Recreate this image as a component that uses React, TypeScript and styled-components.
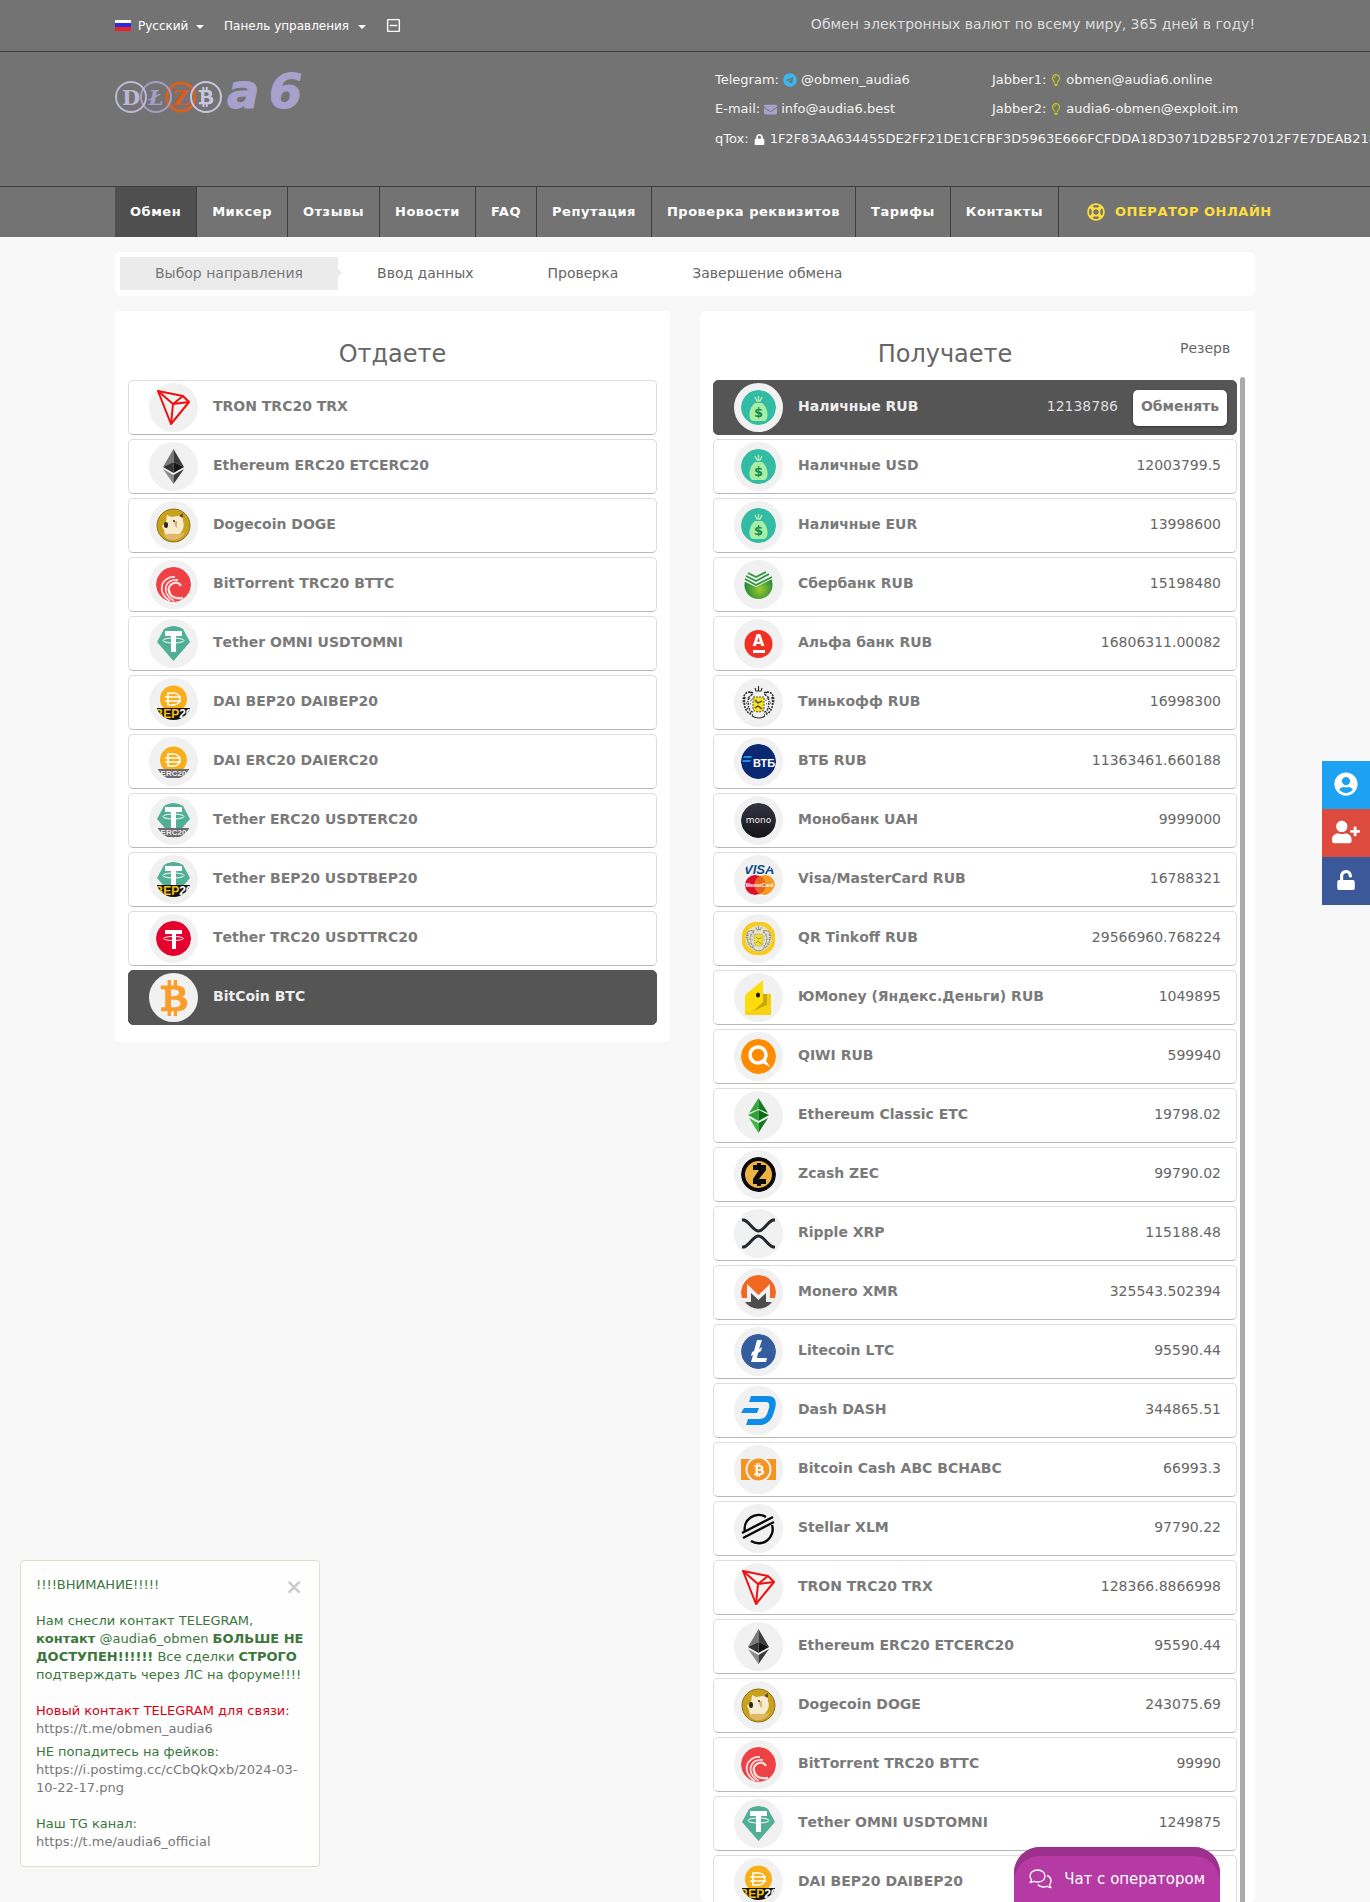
import React, { useState } from "react";
import styled, { createGlobalStyle, css } from "styled-components";
import {
  FaBtc,
  FaEnvelope,
  FaLock,
  FaRegLifeRing,
  FaRegLightbulb,
  FaRegMinusSquare,
  FaTelegram,
  FaUnlock,
  FaUserCircle,
  FaUserPlus,
} from "react-icons/fa";

const GlobalStyle = createGlobalStyle`
  *, *::before, *::after { box-sizing: border-box; }
  body {
    margin: 0;
    background: #f8f8f8;
    color: #666;
    font-family: "DejaVu Sans", Verdana, sans-serif;
    font-size: 14px;
    line-height: 20px;
  }
  a { color: inherit; text-decoration: none; }
  button, select { font: inherit; color: inherit; }
  ul, ol { list-style: none; margin: 0; padding: 0; }
`;

/* ---------- layout ---------- */

const Shell = styled.div`
  display: flex;
  flex-direction: column;
  height: 100vh;
  overflow: hidden;
`;

const Container = styled.div`
  width: 100%;
  max-width: 1140px;
  margin: 0 auto;
`;

const TopBar = styled.div`
  flex: none;
  background: #737373;
  border-bottom: 1px solid #3d3d3d;
  color: #fff;
`;

const TopRow = styled(Container)`
  display: flex;
  align-items: center;
  height: 51px;
  font-size: 12px;
`;

const Language = styled.label`
  display: flex;
  align-items: center;
  gap: 7px;
  margin-right: 20px;
`;

const LanguageSelect = styled.select`
  appearance: none;
  border: 0;
  padding: 0;
  background: none;
  outline-offset: 2px;
`;

const MenuButton = styled.button`
  display: flex;
  align-items: center;
  gap: 9px;
  padding: 0;
  border: 0;
  background: none;
  cursor: pointer;
  margin-right: 20px;
`;

const Caret = styled.span`
  width: 0;
  height: 0;
  border: 4px solid transparent;
  border-bottom-width: 0;
  border-top-color: #fff;
  margin-top: 2px;
`;

const Tagline = styled.p`
  margin: 0 0 3px auto;
  font-size: 14px;
  color: #ddd;
  white-space: nowrap;
`;

const Header = styled.header`
  flex: none;
  background: #737373;
  border-bottom: 1px solid #3d3d3d;
  color: #f4f4f4;
`;

const HeaderRow = styled(Container)`
  display: grid;
  grid-template-columns: 600px 1fr;
  height: 134px;
  padding-top: 18px;
  font-size: 13px;
`;

const Contacts = styled.div`
  display: grid;
  grid-template-columns: 277px 1fr;
  grid-auto-rows: 29px;
  align-content: start;
  white-space: nowrap;
`;

const Contact = styled.div<{ $wide?: boolean }>`
  display: flex;
  align-items: center;
  gap: ${(p) => (p.$wide ? "5px" : "4px")};
  height: ${(p) => (p.$wide ? "22px" : "20px")};
  ${(p) => p.$wide && "grid-column: 1 / -1;"}

  svg {
    flex: none;
    width: auto;
  }
`;

const NavBar = styled.nav`
  flex: none;
  background: #737373;
`;

const NavList = styled.ul`
  display: flex;
  width: 100%;
  max-width: 1140px;
  margin: 0 auto;
`;

const NavLink = styled.a<{ $active?: boolean }>`
  display: block;
  padding: 0 15px;
  border-right: 1px solid #3d3d3d;
  background: ${(p) => (p.$active ? "#4f4f4f" : "transparent")};
  color: #fff;
  font-size: 13px;
  font-weight: bold;
  line-height: 50px;
  letter-spacing: 0.04em;
  white-space: nowrap;
`;

const OperatorLink = styled(NavLink)`
  display: flex;
  align-items: center;
  gap: 10px;
  padding-left: 28px;
  border-right: 0;
  color: #ffdf3e;
`;

const Steps = styled.ol`
  flex: none;
  display: flex;
  align-items: center;
  gap: 4px;
  width: 100%;
  max-width: 1140px;
  height: 44px;
  margin: 15px auto;
  padding: 0 5px 2px;
  background: #fff;
  border-radius: 5px;
`;

const Step = styled.li<{ $active?: boolean }>`
  position: relative;
  padding: 0 35px;
  line-height: 33px;
  color: ${(p) => (p.$active ? "#777" : "#666")};
  ${(p) =>
    p.$active &&
    css`
      background: #ebebeb;
      &::after {
        content: "";
        position: absolute;
        left: 100%;
        top: 50%;
        margin-top: -4px;
        border: 4px solid transparent;
        border-left-color: #ebebeb;
        border-right-width: 0;
      }
    `}
`;

const Columns = styled.main`
  flex: 1;
  min-height: 0;
  display: grid;
  grid-template-columns: 1fr 1fr;
  gap: 30px;
  width: 100%;
  max-width: 1140px;
  margin: 0 auto;
`;

const Panel = styled.section<{ $fill?: boolean }>`
  display: flex;
  flex-direction: column;
  align-self: ${(p) => (p.$fill ? "stretch" : "start")};
  min-height: 0;
  padding: ${(p) => (p.$fill ? "26px 10px 0 13px" : "26px 13px 17px")};
  background: #fff;
  border-radius: 5px;
`;

const PanelHead = styled.div`
  display: flex;
  height: 40px;
`;

const PanelTitle = styled.h2`
  flex: 1;
  margin: 0;
  font-size: 24px;
  font-weight: normal;
  line-height: 34px;
  text-align: center;
`;

const Reserve = styled.span`
  width: 68px;
  padding-left: 3px;
  line-height: 22px;
`;

const ListArea = styled.div`
  flex: 1;
  min-height: 0;
  display: flex;
  gap: 3px;
`;

const ScrollThumb = styled.div`
  width: 5px;
  background: #aaa;
  border-radius: 3px 3px 0 0;
`;

const CoinList = styled.ul`
  flex: 1;
  min-width: 0;
  display: flex;
  flex-direction: column;
  gap: 4px;
  padding-top: 3px;
  overflow-y: auto;
  scrollbar-width: none;
`;

const CoinRow = styled.li<{ $active?: boolean }>`
  flex: none;
  display: flex;
  align-items: center;
  height: 55px;
  padding-right: ${(p) => (p.$active ? "9px" : "15px")};
  border: 1px solid #ddd;
  border-bottom-color: #b8b8b8;
  border-radius: 5px;
  background: #fff;
  color: #666;
  ${(p) => p.$active && "background: #555; border-color: #555; color: #ddd;"}
`;

const CoinLabel = styled.label`
  flex: 1;
  display: flex;
  align-items: center;
  padding-left: 20px;
  cursor: pointer;
`;

const Radio = styled.input`
  appearance: none;
  width: 0;
  height: 0;
  margin: 0;
`;

const CoinBadge = styled.span`
  display: flex;
  align-items: center;
  justify-content: center;
  width: 49px;
  height: 49px;
  margin-right: 15px;
  border-radius: 50%;
  background: #f1f1f1;
`;

const CoinName = styled.span<{ $active?: boolean }>`
  flex: 1;
  padding-bottom: 3px;
  font-weight: bold;
  font-kerning: none;
  color: ${(p) => (p.$active ? "#eee" : "#7a7a7a")};
`;

const Amount = styled.span`
  padding-bottom: 3px;
`;

const ExchangeButton = styled.button`
  width: 94px;
  height: 36px;
  margin-left: 15px;
  padding: 0 0 3px;
  border: 0;
  border-radius: 5px;
  background: #fff;
  box-shadow: 0 1px 3px rgba(0, 0, 0, 0.4);
  color: #777;
  font-weight: bold;
  cursor: pointer;
`;

/* ---------- overlays ---------- */

const SideRail = styled.aside`
  position: fixed;
  top: 40%;
  right: 0;
`;

const RailButton = styled.button<{ $color: string }>`
  display: flex;
  align-items: center;
  justify-content: center;
  width: 48px;
  height: 48px;
  padding: 0 0 2px;
  border: 0;
  background: ${(p) => p.$color};
  color: #fff;
  cursor: pointer;
`;

const Notice = styled.div`
  position: fixed;
  left: 20px;
  bottom: 35px;
  width: 300px;
  padding: 15px;
  border: 1px solid #d6e2cc;
  border-radius: 4px;
  background: #fefefe;
  color: #3c763d;
  font-size: 13px;
  line-height: 18px;
`;

const NoticeText = styled.p`
  margin: 0;
  & + & { margin-top: 5px; }
`;

const NoticeLink = styled.a`
  color: #777;
`;

const Red = styled.span`
  color: #dd0010;
`;

const CloseButton = styled.button`
  float: right;
  width: 20px;
  height: 22px;
  padding: 0;
  border: 0;
  background: none;
  color: #ccc;
  font-size: 21px;
  font-weight: bold;
  line-height: 22px;
  cursor: pointer;
`;

const ChatButton = styled.button`
  position: fixed;
  right: 150px;
  bottom: 0;
  display: flex;
  align-items: center;
  gap: 12px;
  height: 55px;
  padding: 8px 15px 0;
  border: 0;
  border-radius: 26px 26px 0 0;
  background: #b53aa4;
  box-shadow: inset 0 9px 0 #9d2f8d;
  color: #fff;
  font-size: 15px;
  white-space: nowrap;
  cursor: pointer;
`;

/* ---------- drawings ---------- */

const Drawing = styled.svg<{ $round?: boolean }>`
  display: block;
  width: 35px;
  height: 35px;
  border-radius: ${(p) => (p.$round ? "50%" : "0")};
  overflow: hidden;
`;

const sans = "DejaVu Sans, sans-serif";
const narrow = "Liberation Sans, Arial, sans-serif";

const Bep = () => (
  <g>
    <rect x="0" y="23" width="35" height="12" fill="#14120c" />
    <text x="17.500" y="33" textAnchor="middle" fontFamily={narrow} fontWeight="bold" fontSize="12" fill="#f2c40f">
      BEP<tspan fill="#fff">20</tspan>
    </text>
  </g>
);

const Erc = () => (
  <g>
    <path d="M1 25H34L26 34H9Z" fill="#6b6b70" />
    <text x="17.5" y="32" textAnchor="middle" fontFamily={narrow} fontWeight="bold" fontSize="8" fill="#eee">
      ERC20
    </text>
  </g>
);

const TetherMark = ({ y = 0 }: { y?: number }) => (
  <g transform={`translate(0 ${y})`}>
    <path d="M9 4H26V9H20V25H15V9H9Z" fill="#fff" />
    <ellipse cx="17.5" cy="13.5" rx="10.5" ry="2.5" fill="none" stroke="#fff" strokeWidth="1" />
  </g>
);

const Gem = () => <path d="M8 3C13-1 22-1 27 3L34 16L17.500 35L1 16Z" fill="#50af95" />;

const DaiMark = ({ cy }: { cy: number }) => (
  <g>
    <circle cx="17.500" cy={cy} r="13.500" fill="#f9af1a" />
    <g transform={`translate(0 ${cy - 14})`} fill="none" stroke="#fff" strokeWidth="1.600">
      <path d="M12 8V20H17C26 20 26 8 17 8Z" />
      <path d="M9 12H25M9 16H25" />
    </g>
  </g>
);

const Crest = ({ dark }: { dark: string }) => (
  <g fill="none" stroke={dark}>
    <path d="M14 3L15 6H20L21 3M17.500 1V6" strokeWidth="1.200" />
    <path d="M12 8C3 4 1 14 3 19M23 8C32 4 34 14 32 19M4 12C2 22 5 28 12 30M31 12C33 22 30 28 23 30" strokeWidth="1.600" strokeDasharray="2 1" />
    <path d="M11 10C6 11 6 20 9 25M24 10C29 11 29 20 26 25M9 7L12 11M26 7L23 11M6 23L11 27M29 23L24 27" strokeWidth="1.400" strokeDasharray="1.500 1" />
    <path d="M7 12L11 16M28 12L24 16M5 18L10 19M30 18L25 19M9 28L13 26M26 28L22 26" strokeWidth="1.200" strokeDasharray="1 1" />
    <path d="M12 12H23V24C21 28 14 28 12 24Z" fill="#f7e01e" strokeWidth="0.800" strokeDasharray="2 1" />
    <path d="M14 15L17 18L21 16M14 23L17 21L21 24M11 31Q17.500 35 24 31" strokeWidth="1.200" />
  </g>
);

type CoinKey =
  | "trx" | "eth" | "doge" | "btt" | "usdt" | "daiBep" | "daiErc" | "usdtErc" | "usdtBep" | "usdtTrc"
  | "btc" | "cash" | "sber" | "alfa" | "tinkoff" | "vtb" | "mono" | "visa" | "qr" | "yoo" | "qiwi"
  | "etc" | "zec" | "xrp" | "xmr" | "ltc" | "dash" | "bch" | "xlm";

const drawings: Record<CoinKey, React.ReactNode> = {
  trx: (
    <g fill="none" stroke="#f00f0f" strokeWidth="2" strokeLinejoin="round">
      <path d="M2 1L27 6L33 12L15 34Z" />
      <path d="M2 1L17 14L33 12M27 6L17 14L15 34" />
    </g>
  ),
  eth: (
    <g>
      <path d="M17.500 0L7 18L17.500 13Z" fill="#7a7a7a" />
      <path d="M17.500 0L28 18L17.500 13Z" fill="#3c3c3b" />
      <path d="M7 18L17.500 13V24Z" fill="#343434" />
      <path d="M28 18L17.500 13V24Z" fill="#141414" />
      <path d="M7 20L17.500 26V35Z" fill="#8c8c8c" />
      <path d="M28 20L17.500 26V35Z" fill="#3c3c3b" />
    </g>
  ),
  doge: (
    <g>
      <circle cx="17.500" cy="17.500" r="16.500" fill="#c9a21c" stroke="#8a6d1c" />
      <path d="M11 7L15 9L22 8L27 6L27 13C29 18 27 24 22 27L9 27L8 22L6 18L10 14Z" fill="#f8ecd0" />
      <path d="M8 27C14 24 24 28 29 24C26 33 11 35 8 27Z" fill="#e0b86a" />
      <path d="M18 14L21 13V20L19 18Z" fill="#dcae6c" />
      <ellipse cx="10" cy="17" rx="2" ry="3" fill="#2c2414" />
      <circle cx="18" cy="13" r="1" fill="#2c2414" />
      <path d="M23 8L27 5V10Z" fill="#6b4d1a" />
    </g>
  ),
  btt: (
    <g>
      <circle cx="17.500" cy="17.500" r="17.500" fill="#ee4144" />
      <g fill="none" stroke="#fbe0df" strokeWidth="1.800">
        <path d="M19 10C5 9 0 26 14 34" />
        <path d="M22 13C9 11 4 26 18 34" />
        <path d="M25 19C22 12 11 17 13 24C14 30 20 32 27 31" strokeWidth="2.400" />
      </g>
    </g>
  ),
  usdt: (<g><Gem /><TetherMark y={1} /></g>),
  daiBep: (<g><DaiMark cy={14} /><Bep /></g>),
  daiErc: (<g><DaiMark cy={16} /><Erc /></g>),
  usdtErc: (<g><Gem /><TetherMark /><Erc /></g>),
  usdtBep: (<g><Gem /><TetherMark /><Bep /></g>),
  usdtTrc: (
    <g>
      <circle cx="17.500" cy="17.500" r="17.500" fill="#e6002d" />
      <path d="M9 9H26V13H20V28H16V13H9Z" fill="#fff" />
      <ellipse cx="17.500" cy="17.500" rx="10" ry="2" fill="none" stroke="#fff" />
    </g>
  ),
  btc: null,
  cash: (
    <g>
      <circle cx="17.500" cy="17.500" r="17.500" fill="#33bca5" />
      <path d="M14 7L16 11H19L21 7M17.500 6V11" fill="none" stroke="#b9f0b0" strokeWidth="1.300" />
      <path d="M14 13H21C28 18 28 31 23 31H12C7 31 7 18 14 13Z" fill="#a9eea5" />
      <text x="17.500" y="27" textAnchor="middle" fontFamily={sans} fontWeight="bold" fontSize="13" fill="#158a4c">$</text>
    </g>
  ),
  sber: (
    <g>
      <defs>
        <radialGradient id="sber" cx="55%" cy="65%" r="60%">
          <stop offset="0" stopColor="#9ccb2a" />
          <stop offset="1" stopColor="#14803c" />
        </radialGradient>
      </defs>
      <circle cx="17.500" cy="18" r="14" fill="url(#sber)" />
      <path d="M0 0H35V10L15 20L0 13Z" fill="#f1f1f1" />
      <g fill="none" stroke="#2f9440" strokeWidth="1.800">
        <path d="M4 12L15 18L31 10" />
        <path d="M5 9L15 14L28 7" />
        <path d="M7 6L15 10L25 5" />
      </g>
    </g>
  ),
  alfa: (
    <g>
      <circle cx="17.500" cy="18" r="14" fill="#ee3124" />
      <text x="17.500" y="20" textAnchor="middle" fontFamily={sans} fontWeight="bold" fontSize="15" fill="#fff">А</text>
      <rect x="12" y="24" width="12" height="3" fill="#fff" />
    </g>
  ),
  tinkoff: <Crest dark="#333" />,
  vtb: (
    <g>
      <circle cx="17.500" cy="17.500" r="17.500" fill="#0a2973" />
      <path d="M3 12H11L10 14H2ZM2 16H10L9 18H1Z" fill="#1c8fe0" />
      <text x="12" y="23" fontFamily={narrow} fontWeight="bold" fontSize="11" fill="#fff">ВТБ</text>
    </g>
  ),
  mono: (
    <g>
      <defs>
        <linearGradient id="mono" x1="0" y1="0" x2="0" y2="1">
          <stop offset="0" stopColor="#33343f" />
          <stop offset="1" stopColor="#15161b" />
        </linearGradient>
      </defs>
      <circle cx="17.500" cy="17.500" r="17.500" fill="url(#mono)" />
      <text x="17.500" y="20" textAnchor="middle" fontFamily={sans} fontSize="9" fill="#eee">mono</text>
    </g>
  ),
  visa: (
    <g>
      <text x="3" y="12" fontFamily={narrow} fontStyle="italic" fontWeight="bold" fontSize="13" fill="#0c4c8c">VISA</text>
      <circle cx="14" cy="23" r="10" fill="#dd0d2d" />
      <circle cx="24" cy="23" r="10" fill="#f49b1f" />
      <path d="M19 14A10 10 0 0 1 19 32A10 10 0 0 1 19 14Z" fill="#e8641f" />
      <text x="18.500" y="25" textAnchor="middle" fontFamily={narrow} fontWeight="bold" fontSize="5" fill="#fff">MasterCard</text>
    </g>
  ),
  qr: (
    <g>
      <rect x="1" y="1" width="33" height="33" rx="13" fill="#f8cb1c" />
      <circle cx="17.500" cy="17.500" r="13" fill="#e4e0cc" />
      <g transform="translate(4 4) scale(0.78)"><Crest dark="#8a8a80" /></g>
    </g>
  ),
  yoo: (
    <g>
      <path d="M22 14H30V35H6Z" fill="#f4cf0e" />
      <path d="M22 14H26V25L10 33L22 22Z" fill="#c9a90c" />
      <path d="M4 15L22 0V22L7 35H4Z" fill="#ffdc0c" />
      <path d="M4 35V31L10 32L26 25L30 26V35Z" fill="#f8d311" />
      <ellipse cx="17" cy="15" rx="2" ry="2.500" fill="#181408" />
    </g>
  ),
  qiwi: (
    <g>
      <circle cx="17.500" cy="17.500" r="17.500" fill="#ff8c00" />
      <circle cx="17" cy="16" r="8" fill="none" stroke="#fff" strokeWidth="3.500" />
      <path d="M18 22L24 20L29 28Z" fill="#fff" />
    </g>
  ),
  etc: (
    <g>
      <path d="M17.500 0L8 15L17.500 11Z" fill="#34a93a" />
      <path d="M17.500 0L27 15L17.500 11Z" fill="#147a1e" />
      <path d="M7 17L17.500 12V23Z" fill="#2fa436" />
      <path d="M28 17L17.500 12V23Z" fill="#0b6b16" />
      <path d="M8 20L17.500 25V35Z" fill="#41b845" />
      <path d="M27 20L17.500 25V35Z" fill="#147a1e" />
    </g>
  ),
  zec: (
    <g>
      <circle cx="17.500" cy="17.500" r="15.500" fill="#ecb244" stroke="#0a0a0a" strokeWidth="4" />
      <path d="M12 8H16V6H20V8H25V13L18 22H25V27H20V29H16V27H12V22L18 13H12Z" fill="#0a0a0a" />
    </g>
  ),
  xrp: (
    <g fill="none" stroke="#23292f" strokeWidth="3">
      <path d="M1 4H3C9 6 12 15 17.500 15S26 6 32 4H34" />
      <path d="M1 31H3C9 29 12 20 17.500 20S26 29 32 31H34" />
    </g>
  ),
  xmr: (
    <g>
      <circle cx="17.500" cy="17.500" r="17.500" fill="#f26822" />
      <path d="M0 23H6V9L17.500 20L29 9V23H35V35H0Z" fill="#f1f1f1" />
      <path d="M4 27H10V18L17.500 25L25 18V27H31A17 17 0 0 1 4 27Z" fill="#4d4d4d" />
    </g>
  ),
  ltc: (
    <g>
      <circle cx="17.500" cy="17.500" r="17.500" fill="#345d9d" />
      <path d="M16 6H21L18 15L21 13L20 17L17 19L16 24H26L25 28H10L12 21L10 22L11 18L13 17Z" fill="#fff" />
    </g>
  ),
  dash: (
    <g fill="#0d8ce8">
      <path d="M10 3H27C36 3 36 11 33 19C31 27 26 32 19 32H5L7 26H19C24 26 26 22 27 18C29 13 29 9 25 9H8Z" />
      <path d="M3 15H18L16 20H0Z" />
    </g>
  ),
  bch: (
    <g>
      <rect x="0" y="7" width="35" height="21" fill="#f79320" />
      <circle cx="17.500" cy="17.500" r="13" fill="#f1f1f1" />
      <circle cx="17.500" cy="17.500" r="11" fill="#f79320" />
      <FaBtc x="11" y="11" size={14} color="#fff" />
    </g>
  ),
  xlm: (
    <g fill="none" stroke="#0a0a0a" strokeWidth="2.400">
      <path d="M4 21A14 14 0 0 1 25 6M31 14A14 14 0 0 1 10 30" />
      <path d="M1 22L32 6M2 27L33 11" />
    </g>
  ),
};

const unclipped: CoinKey[] = ["xrp", "dash", "bch", "yoo", "trx", "btc", "xlm"];

const CoinIcon = ({ coin }: { coin: CoinKey }) => (
  <CoinBadge>
    {coin === "btc" ? (
      <FaBtc size={36} color="#fb9d2a" />
    ) : (
      <Drawing viewBox="0 0 35 35" $round={!unclipped.includes(coin)} aria-hidden="true">
        {drawings[coin]}
      </Drawing>
    )}
  </CoinBadge>
);

const Flag = () => (
  <svg width="16" height="11" viewBox="0 0 16 11" aria-hidden="true">
    <rect width="16" height="4" fill="#fff" />
    <rect y="3" width="16" height="4" fill="#2a2ae0" />
    <rect y="7" width="16" height="4" fill="#ee2222" />
  </svg>
);

const ChatBubbles = () => (
  <svg width="23" height="20" viewBox="0 0 23 20" fill="none" stroke="#fff" strokeWidth="1.400" strokeLinejoin="round" aria-hidden="true">
    <path d="M8.500 1C13 1 16 3.500 16 7S13 13 8.500 13C7 13 6 12.800 5 12.300C4 13 2.500 13.600 1 13.600C2 12.500 2.500 11.500 2.600 10.700C1.500 9.700 1 8.500 1 7C1 3.500 4 1 8.500 1Z" />
    <path d="M18 6.500C20.500 7.500 22 9.500 22 12C22 13.500 21.500 14.700 20.500 15.700C20.600 16.700 21.200 17.700 22 18.600C20.500 18.600 19 18 18 17.300C14.500 18.700 10.500 17.800 8.800 15.500" />
  </svg>
);

const Logo = () => (
  <svg width="202" height="48" viewBox="0 0 202 48" overflow="visible" role="img" aria-label="a6">
    <circle cx="66" cy="27" r="14" fill="none" stroke="#d9601f" strokeWidth="3" />
    <g fill="none" strokeWidth="2">
      <circle cx="41" cy="27" r="15" stroke="#a49ec6" />
      <circle cx="16" cy="27" r="15" stroke="#bdb8d8" />
      <circle cx="91" cy="27" r="15" stroke="#c9c5e0" />
    </g>
    <g fontFamily="DejaVu Serif, serif" fontWeight="bold" fontSize="21" textAnchor="middle">
      <text x="16" y="35" fill="#bdb8d8">D</text>
      <text x="41" y="35" fontStyle="italic" fill="#a49ec6">Ł</text>
      <text x="66" y="35" fill="#e0591a">Z</text>
    </g>
    <FaBtc x="81" y="17" size={20} color="#c9c5e0" />
    <g fontFamily={sans} fontStyle="italic" fontWeight="bold" fill="#a8a1cc" stroke="#a8a1cc">
      <text x="112" y="38" fontSize="48">a</text>
      <text x="154" y="38" fontSize="48">6</text>
    </g>
  </svg>
);

/* ---------- data ---------- */

const navItems = ["Обмен", "Миксер", "Отзывы", "Новости", "FAQ", "Репутация", "Проверка реквизитов", "Тарифы", "Контакты"];
const steps = ["Выбор направления", "Ввод данных", "Проверка", "Завершение обмена"];

type Coin = { icon: CoinKey; name: string; amount?: string };

const giveCoins: Coin[] = [
  { icon: "trx", name: "TRON TRC20 TRX" },
  { icon: "eth", name: "Ethereum ERC20 ETCERC20" },
  { icon: "doge", name: "Dogecoin DOGE" },
  { icon: "btt", name: "BitTorrent TRC20 BTTC" },
  { icon: "usdt", name: "Tether OMNI USDTOMNI" },
  { icon: "daiBep", name: "DAI BEP20 DAIBEP20" },
  { icon: "daiErc", name: "DAI ERC20 DAIERC20" },
  { icon: "usdtErc", name: "Tether ERC20 USDTERC20" },
  { icon: "usdtBep", name: "Tether BEP20 USDTBEP20" },
  { icon: "usdtTrc", name: "Tether TRC20 USDTTRC20" },
  { icon: "btc", name: "BitCoin BTC" },
];

const getCoins: Coin[] = [
  { icon: "cash", name: "Наличные RUB", amount: "12138786" },
  { icon: "cash", name: "Наличные USD", amount: "12003799.5" },
  { icon: "cash", name: "Наличные EUR", amount: "13998600" },
  { icon: "sber", name: "Сбербанк RUB", amount: "15198480" },
  { icon: "alfa", name: "Альфа банк RUB", amount: "16806311.00082" },
  { icon: "tinkoff", name: "Тинькофф RUB", amount: "16998300" },
  { icon: "vtb", name: "ВТБ RUB", amount: "11363461.660188" },
  { icon: "mono", name: "Монобанк UAH", amount: "9999000" },
  { icon: "visa", name: "Visa/MasterCard RUB", amount: "16788321" },
  { icon: "qr", name: "QR Tinkoff RUB", amount: "29566960.768224" },
  { icon: "yoo", name: "ЮMoney (Яндекс.Деньги) RUB", amount: "1049895" },
  { icon: "qiwi", name: "QIWI RUB", amount: "599940" },
  { icon: "etc", name: "Ethereum Classic ETC", amount: "19798.02" },
  { icon: "zec", name: "Zcash ZEC", amount: "99790.02" },
  { icon: "xrp", name: "Ripple XRP", amount: "115188.48" },
  { icon: "xmr", name: "Monero XMR", amount: "325543.502394" },
  { icon: "ltc", name: "Litecoin LTC", amount: "95590.44" },
  { icon: "dash", name: "Dash DASH", amount: "344865.51" },
  { icon: "bch", name: "Bitcoin Cash ABC BCHABC", amount: "66993.3" },
  { icon: "xlm", name: "Stellar XLM", amount: "97790.22" },
  { icon: "trx", name: "TRON TRC20 TRX", amount: "128366.8866998" },
  { icon: "eth", name: "Ethereum ERC20 ETCERC20", amount: "95590.44" },
  { icon: "doge", name: "Dogecoin DOGE", amount: "243075.69" },
  { icon: "btt", name: "BitTorrent TRC20 BTTC", amount: "99990" },
  { icon: "usdt", name: "Tether OMNI USDTOMNI", amount: "1249875" },
  { icon: "daiBep", name: "DAI BEP20 DAIBEP20" },
];

type CoinsProps = {
  group: string;
  coins: Coin[];
  selected: string;
  onSelect: (name: string) => void;
  exchange?: boolean;
};

const Coins = ({ group, coins, selected, onSelect, exchange }: CoinsProps) => (
  <CoinList>
    {coins.map((coin) => {
      const active = coin.name === selected;
      return (
        <CoinRow key={coin.name} $active={active}>
          <CoinLabel>
            <Radio type="radio" name={group} checked={active} onChange={() => onSelect(coin.name)} />
            <CoinIcon coin={coin.icon} />
            <CoinName $active={active}>{coin.name}</CoinName>
            {coin.amount && <Amount>{coin.amount}</Amount>}
          </CoinLabel>
          {active && exchange && <ExchangeButton type="button">Обменять</ExchangeButton>}
        </CoinRow>
      );
    })}
  </CoinList>
);

export default function App() {
  const [give, setGive] = useState("BitCoin BTC");
  const [get, setGet] = useState("Наличные RUB");
  const [noticeOpen, setNoticeOpen] = useState(true);

  return (
    <Shell>
      <GlobalStyle />
      <TopBar>
        <TopRow>
          <Language>
            <Flag />
            <LanguageSelect aria-label="Язык" defaultValue="ru">
              <option value="ru">Русский</option>
            </LanguageSelect>
            <Caret />
          </Language>
          <MenuButton type="button" aria-haspopup="menu">
            Панель управления
            <Caret />
          </MenuButton>
          <MenuButton type="button" aria-label="Свернуть">
            <FaRegMinusSquare size={15} />
          </MenuButton>
          <Tagline>Обмен электронных валют по всему миру, 365 дней в году!</Tagline>
        </TopRow>
      </TopBar>

      <Header>
        <HeaderRow>
          <a href="#home"><Logo /></a>
          <Contacts>
            <Contact>Telegram: <FaTelegram size={14} color="#39b9f0" /> <a href="#telegram">@obmen_audia6</a></Contact>
            <Contact>Jabber1: <FaRegLightbulb size={12} color="#c6c41c" /> <a href="#jabber1">obmen@audia6.online</a></Contact>
            <Contact>E-mail: <FaEnvelope size={13} color="#a8a1cc" /> <a href="#email">info@audia6.best</a></Contact>
            <Contact>Jabber2: <FaRegLightbulb size={12} color="#c6c41c" /> <a href="#jabber2">audia6-obmen@exploit.im</a></Contact>
            <Contact $wide>
              qTox: <FaLock size={11} color="#fff" />{" "}
              <span>1F2F83AA634455DE2FF21DE1CFBF3D5963E666FCFDDA18D3071D2B5F27012F7E7DEAB218</span>
            </Contact>
          </Contacts>
        </HeaderRow>
      </Header>

      <NavBar>
        <NavList>
          {navItems.map((item, i) => (
            <li key={item}>
              <NavLink href="#nav" $active={i === 0}>{item}</NavLink>
            </li>
          ))}
          <li>
            <OperatorLink href="#operator">
              <FaRegLifeRing size={18} />
              ОПЕРАТОР ОНЛАЙН
            </OperatorLink>
          </li>
        </NavList>
      </NavBar>

      <Steps>
        {steps.map((step, i) => (
          <Step key={step} $active={i === 0}>{step}</Step>
        ))}
      </Steps>

      <Columns>
        <Panel>
          <PanelHead>
            <PanelTitle>Отдаете</PanelTitle>
          </PanelHead>
          <Coins group="give" coins={giveCoins} selected={give} onSelect={setGive} />
        </Panel>
        <Panel $fill>
          <PanelHead>
            <PanelTitle>Получаете</PanelTitle>
            <Reserve>Резерв</Reserve>
          </PanelHead>
          <ListArea>
            <Coins group="get" coins={getCoins} selected={get} onSelect={setGet} exchange />
            <ScrollThumb />
          </ListArea>
        </Panel>
      </Columns>

      <SideRail>
        <RailButton type="button" aria-label="Профиль" $color="#1da1f2"><FaUserCircle size={24} /></RailButton>
        <RailButton type="button" aria-label="Регистрация" $color="#dd4b3e"><FaUserPlus size={28} /></RailButton>
        <RailButton type="button" aria-label="Вход" $color="#3b5998"><FaUnlock size={20} /></RailButton>
      </SideRail>

      {noticeOpen && (
        <Notice role="alert">
          <CloseButton type="button" aria-label="Закрыть" onClick={() => setNoticeOpen(false)}>×</CloseButton>
          <NoticeText>
            !!!!ВНИМАНИЕ!!!!!<br /><br />
            Нам снесли контакт TELEGRAM, <b>контакт</b> @audia6_obmen <b>БОЛЬШЕ НЕ ДОСТУПЕН!!!!!!</b> Все сделки{" "}
            <b>СТРОГО</b> подтверждать через ЛС на форуме!!!!<br /><br />
            <Red>Новый контакт TELEGRAM для связи:</Red><br />
            <NoticeLink href="#contact">https://t.me/obmen_audia6</NoticeLink>
          </NoticeText>
          <NoticeText>
            НЕ попадитесь на фейков:<br />
            <NoticeLink href="#proof">https://i.postimg.cc/cCbQkQxb/2024-03-10-22-17.png</NoticeLink><br /><br />
            Наш TG канал:<br />
            <NoticeLink href="#channel">https://t.me/audia6_official</NoticeLink>
          </NoticeText>
        </Notice>
      )}

      <ChatButton type="button">
        <ChatBubbles />
        Чат с оператором
      </ChatButton>
    </Shell>
  );
}
